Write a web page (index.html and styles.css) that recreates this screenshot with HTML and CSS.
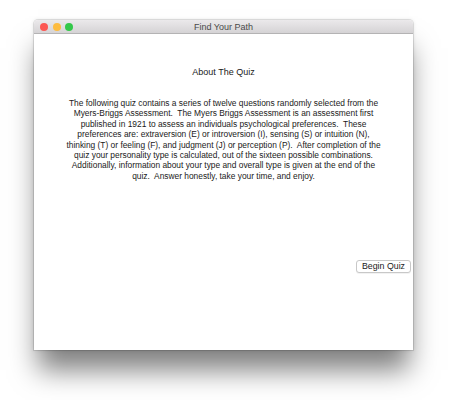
FILE: index.html
```html
<!DOCTYPE html>
<html>
<head>
<meta charset="utf-8">
<link rel="stylesheet" href="styles.css">
</head>
<body>
<div class="window">
  <div class="titlebar">
    <div class="lights">
      <span class="light red"></span>
      <span class="light yellow"></span>
      <span class="light green"></span>
    </div>
    <div class="title">Find Your Path</div>
  </div>
  <div class="content">
    <h1 class="heading">About The Quiz</h1>
    <p class="body-text">The following quiz contains a series of twelve questions randomly selected from the<br>Myers-Briggs Assessment.&nbsp; The Myers Briggs Assessment is an assessment first<br>published in 1921 to assess an individuals psychological preferences.&nbsp; These<br>preferences are: extraversion (E) or introversion (I), sensing (S) or intuition (N),<br>thinking (T) or feeling (F), and judgment (J) or perception (P).&nbsp; After completion of the<br>quiz your personality type is calculated, out of the sixteen possible combinations.<br>Additionally, information about your type and overall type is given at the end of the<br>quiz.&nbsp; Answer honestly, take your time, and enjoy.</p>
    <div class="actions">
      <button class="btn">Begin Quiz</button>
    </div>
  </div>
</div>
</body>
</html>
```

FILE: styles.css
```css
html, body {
  margin: 0;
  padding: 0;
  background: #ffffff;
}
body {
  width: 449px;
  height: 400px;
  overflow: hidden;
  font-family: "Liberation Sans", Arial, sans-serif;
}
.window {
  margin: 20px 0 0 34px;
  width: 379px;
  height: 330px;
  background: #ffffff;
  border-radius: 4px 4px 0 0;
  box-shadow: 0 0 0 1px rgba(0,0,0,0.10), 0 0 4px rgba(0,0,0,0.12), 0 24px 26px -4px rgba(0,0,0,0.5);
  display: flex;
  flex-direction: column;
}
.titlebar {
  position: relative;
  height: 13px;
  flex: none;
  background: linear-gradient(#ebe9eb, #d5d3d5);
  border-bottom: 1px solid #b4b3b4;
  border-radius: 4px 4px 0 0;
  display: flex;
  align-items: center;
  justify-content: center;
}
.lights {
  position: absolute;
  left: 6px;
  top: 3px;
  display: flex;
  gap: 4.5px;
}
.light {
  width: 8px;
  height: 8px;
  border-radius: 50%;
  display: block;
}
.red { background: #fc5753; }
.yellow { background: #fdbc40; }
.green { background: #34c84a; }
.title {
  font-size: 9px;
  color: #4a4a4a;
}
.content {
  flex: 1;
  display: flex;
  flex-direction: column;
  align-items: center;
  padding-top: 33px;
}
.heading {
  margin: 0;
  font-size: 9px;
  font-weight: normal;
  color: #1a1a1a;
  line-height: 11px;
}
.body-text {
  margin: 20px 0 0;
  font-size: 8.4px;
  line-height: 10.4px;
  color: #1a1a1a;
  text-align: center;
}
.actions {
  align-self: stretch;
  display: flex;
  justify-content: flex-end;
  padding: 0 2px 0 0;
  margin-top: 79px;
}
.btn {
  font-family: "Liberation Sans", Arial, sans-serif;
  font-size: 8.8px;
  color: #222;
  background: #ffffff;
  border: 1px solid #c8c8c8;
  border-radius: 3px;
  height: 13px;
  padding: 0 5px;
  line-height: 11px;
  box-shadow: 0 1px 0 rgba(0,0,0,0.05);
}
```
